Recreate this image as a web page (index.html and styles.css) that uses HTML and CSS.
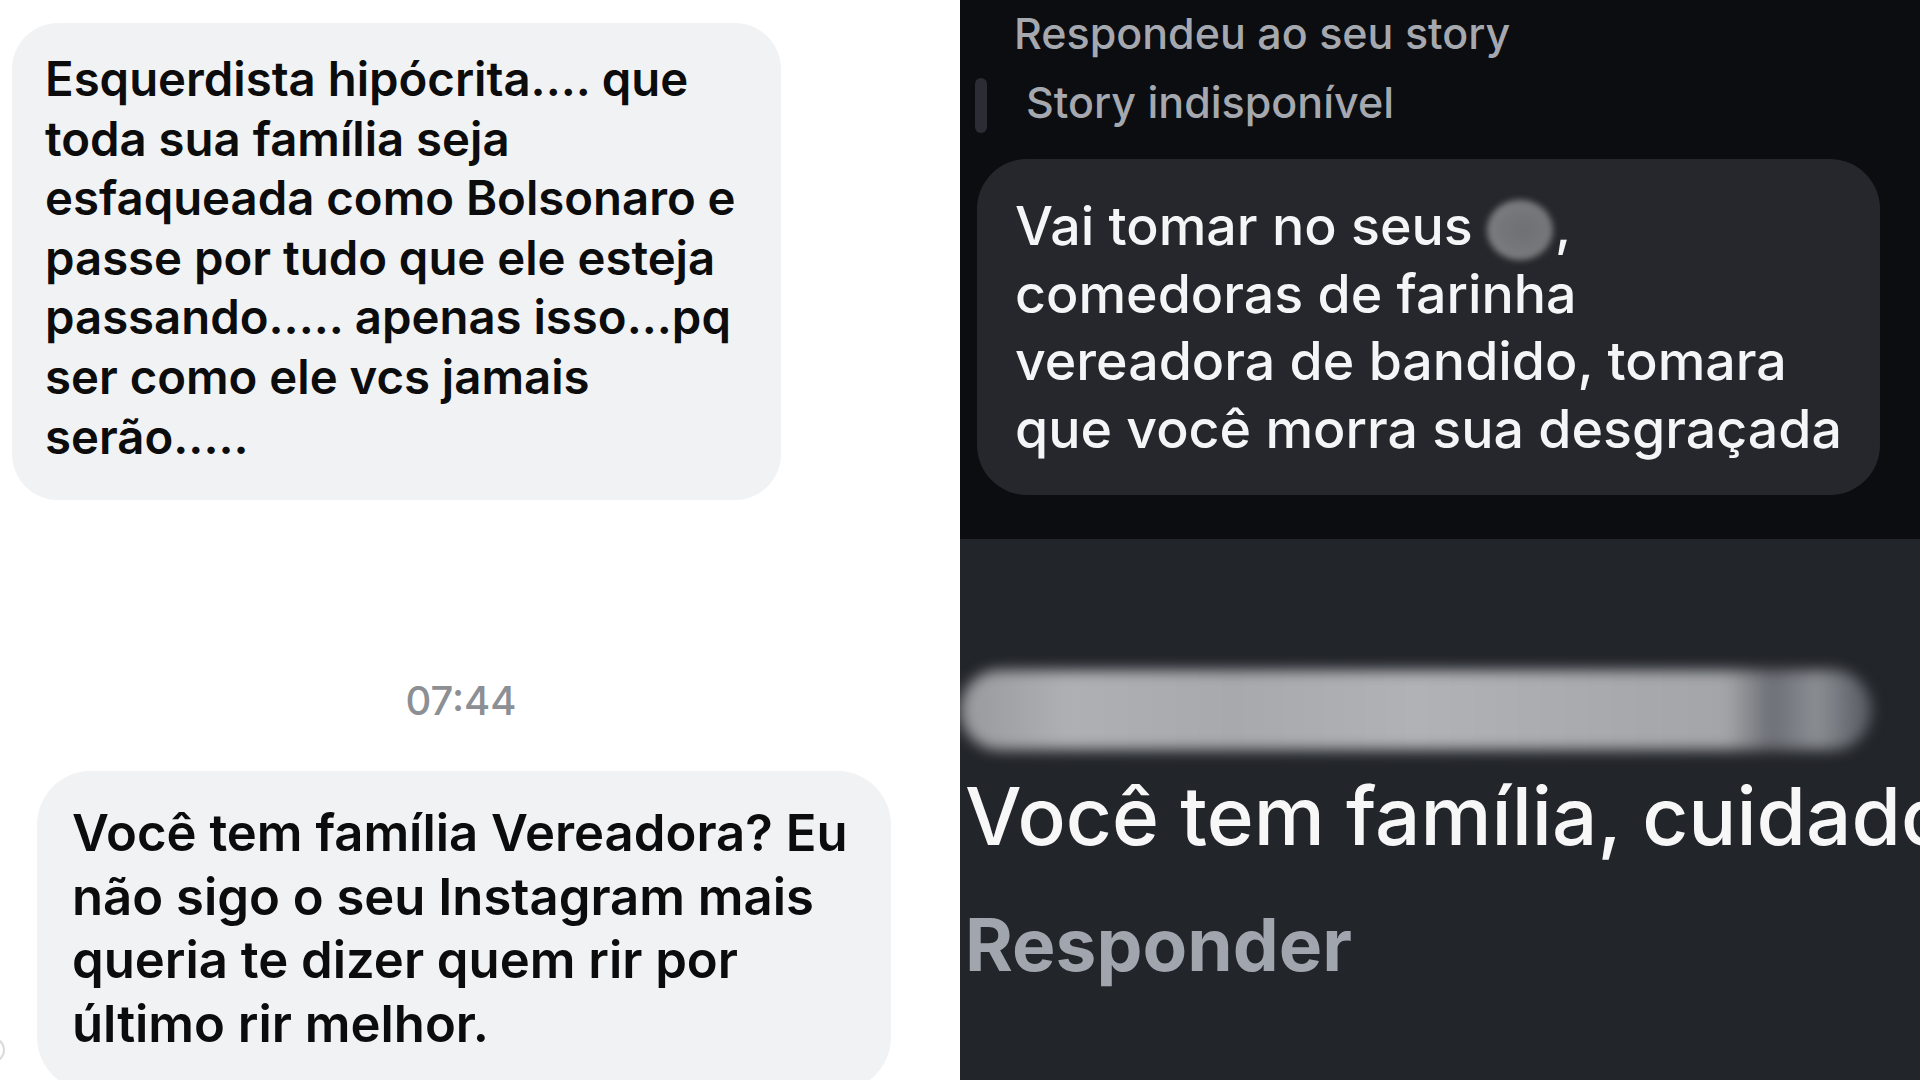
FILE: index.html
```html
<!DOCTYPE html>
<html lang="pt-BR">
<head>
<meta charset="utf-8">
<title>Mensagens</title>
<link rel="stylesheet" href="styles.css">
</head>
<body>
<main class="collage">
  <section class="panel panel-light">
    <div class="bubble bubble-light bubble-one">
      <p class="msg msg-one">Esquerdista hipócrita.... que<br>toda sua família seja<br>esfaqueada como Bolsonaro e<br>passe por tudo que ele esteja<br>passando..... apenas isso...pq<br>ser como ele vcs jamais<br>serão.....</p>
    </div>
    <div class="thread">
      <div class="timestamp">07:44</div>
      <div class="bubble-row">
        <span class="avatar-edge"></span>
        <div class="bubble bubble-light bubble-two">
          <p class="msg msg-two">Você tem família Vereadora? Eu<br>não sigo o seu Instagram mais<br>queria te dizer quem rir por<br>último rir melhor.</p>
        </div>
      </div>
    </div>
  </section>

  <section class="panel panel-dark">
    <div class="story-top">
      <div class="reply-label">Respondeu ao seu story</div>
      <div class="story-row">
        <span class="story-bar"></span>
        <span class="story-label">Story indisponível</span>
      </div>
      <div class="bubble bubble-dark">
        <p class="msg msg-dark">Vai tomar no seus <span class="censor"></span>,<br>comedoras de farinha<br>vereadora de bandido, tomara<br>que você morra sua desgraçada</p>
      </div>
    </div>
    <div class="comment">
      <div class="blurred-name"></div>
      <div class="comment-text">Você tem família, cuidado</div>
      <div class="comment-action">Responder</div>
    </div>
  </section>
</main>
</body>
</html>
```
FILE: styles.css
```css
* { box-sizing: border-box; }
html, body { margin: 0; padding: 0; }
body {
  width: 1920px;
  height: 1080px;
  overflow: hidden;
  font-family: Inter, "Noto Sans", "Liberation Sans", sans-serif;
  font-weight: 500;
}
.collage {
  display: grid;
  grid-template-columns: 960px 960px;
  height: 1080px;
}
.panel { overflow: hidden; height: 1080px; }

/* ---------- left, light ---------- */
.panel-light {
  background: #ffffff;
  padding-top: 23px;
}
.bubble { margin: 0; }
.msg { margin: 0; white-space: nowrap; }
.bubble-light { background: #f1f2f4; color: #0c0c0d; }
.bubble-one {
  margin-left: 12px;
  width: 769px;
  height: 477px;
  border-radius: 46px;
  padding: 26px 20px 0 33px;
}
.msg-one { font-size: 47.3px; line-height: 59.6px; font-weight: 600; }

.thread { width: 891px; padding-left: 37px; }
.timestamp {
  margin-top: 177px;
  text-align: center;
  font-size: 40px;
  line-height: 48px;
  color: #8c8f94;
  padding-right: 6px;
}
.bubble-row { display: flex; align-items: flex-end; margin-top: 46px; }
.avatar-edge {
  flex: none;
  width: 26px;
  height: 26px;
  margin-left: -58px;
  margin-right: 32px;
  margin-bottom: 28px;
  border-radius: 50%;
  border: 2px solid #d9dadd;
}
.bubble-two {
  flex: 1;
  height: 320px;
  border-radius: 54px;
  padding: 30px 20px 0 35px;
}
.msg-two { font-size: 50.8px; line-height: 63.5px; font-weight: 600; }

/* ---------- right, dark ---------- */
.panel-dark { display: flex; flex-direction: column; }
.story-top {
  height: 539px;
  background: #0b0d10;
  padding-top: 7px;
}
.reply-label {
  padding-left: 54px;
  font-size: 43px;
  line-height: 52px;
  color: #a5a8ae;
}
.story-row {
  display: flex;
  align-items: flex-start;
  margin-top: 17px;
}
.story-bar {
  flex: none;
  width: 12px;
  height: 55px;
  margin: 2px 0 0 15px;
  border-radius: 6px;
  background: #2a2d33;
}
.story-label {
  margin-left: 39px;
  font-size: 43px;
  line-height: 52px;
  color: #a5a8ae;
}
.bubble-dark {
  margin: 26px 0 0 17px;
  width: 903px;
  height: 336px;
  border-radius: 50px;
  background: #25272c;
  padding: 33px 20px 0 38px;
  color: #f4f5f6;
}
.msg-dark { font-size: 53.7px; line-height: 67.3px; }
.censor {
  display: inline-block;
  width: 66px;
  height: 60px;
  margin-right: 2px;
  vertical-align: -15px;
  border-radius: 50%;
  background: radial-gradient(ellipse at 55% 50%, #6f7073 0%, #77787b 55%, #85878a 80%, rgba(130,132,136,0.4) 100%);
  filter: blur(3px);
}

.comment {
  flex: 1;
  background: #22252a;
  padding-top: 131px;
  overflow: hidden;
}
.blurred-name {
  width: 912px;
  height: 80px;
  border-radius: 40px;
  background: linear-gradient(to right, #97999d 0%, #aeb0b3 12%, #a7a9ac 30%, #b0b2b5 50%, #a8aaad 70%, #a3a5a8 84%, #6c6f75 89%, #8b8e93 94%, #666a70 98%, #555960 100%);
  filter: blur(7px);
}
.comment-text {
  margin-top: 18px;
  padding-left: 5px;
  font-size: 80px;
  line-height: 96px;
  color: #f7f7f8;
  white-space: nowrap;
}
.comment-action {
  margin-top: 37px;
  padding-left: 5px;
  font-size: 73px;
  line-height: 88px;
  font-weight: 700;
  color: #a1a5ae;
}
```
